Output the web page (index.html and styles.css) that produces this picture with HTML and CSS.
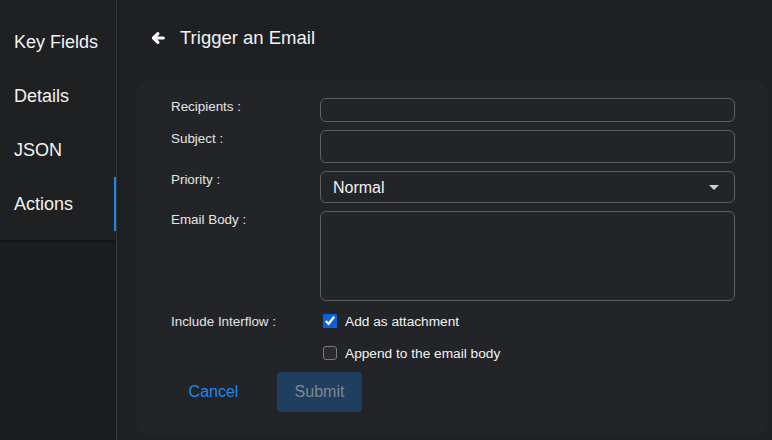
FILE: index.html
```html
<!DOCTYPE html>
<html lang="en">
<head>
    <meta charset="UTF-8">
    <meta name="viewport" content="width=device-width, initial-scale=1.0">
    <title>Trigger an Email</title>
    <link rel="stylesheet" href="styles.css">
</head>
<body>
    <aside class="sidebar">
        <nav class="side-tabs">
            <a href="#key-fields" class="tab">Key Fields</a>
            <a href="#details" class="tab">Details</a>
            <a href="#json" class="tab">JSON</a>
            <a href="#actions" class="tab active">Actions</a>
        </nav>
    </aside>

    <main>
        <div class="page-title">
            <button class="back-btn" aria-label="Back">
                <svg width="14" height="14" viewBox="0 0 14 14">
                    <path d="M12.3 7 H2.8 M6.9 2.6 L2.5 7 L6.9 11.4" fill="none" stroke="#ffffff" stroke-width="3.2" stroke-linecap="round" stroke-linejoin="round"/>
                </svg>
            </button>
            <h1>Trigger an Email</h1>
        </div>

        <form class="email-card" onsubmit="return false">
            <label class="field-label" for="recipients">Recipients :</label>
            <input id="recipients" class="field short" type="text">

            <label class="field-label" for="subject">Subject :</label>
            <input id="subject" class="field" type="text">

            <label class="field-label" for="priority">Priority :</label>
            <div class="select-wrap">
                <select id="priority" class="field">
                    <option>Normal</option>
                    <option>High</option>
                    <option>Low</option>
                </select>
                <span class="caret"></span>
            </div>

            <label class="field-label" for="body">Email Body :</label>
            <textarea id="body" class="field body-field"></textarea>

            <span class="field-label interflow-label">Include Interflow :</span>
            <div class="checks">
                <label class="check-row">
                    <input type="checkbox" checked>
                    <span>Add as attachment</span>
                </label>
                <label class="check-row">
                    <input type="checkbox">
                    <span>Append to the email body</span>
                </label>
            </div>

            <div class="actions">
                <button type="button" class="btn btn-link">Cancel</button>
                <button type="submit" class="btn btn-primary" disabled>Submit</button>
            </div>
        </form>
    </main>
</body>
</html>
```

FILE: styles.css
```css
:root {
    --page-bg: #1f2023;
    --side-bg: #1f2022;
    --card-bg: #232427;
    --border: #5e5f62;
    --text: #f2f2f2;
    --label: #e4e4e4;
    --accent: #1e88f0;
}

* {
    margin: 0;
    padding: 0;
    box-sizing: border-box;
    font-family: "Liberation Sans", Arial, sans-serif;
}

body {
    background: var(--page-bg);
    color: var(--text);
    height: 100vh;
    display: flex;
    overflow: hidden;
}

/* left tab list */
.sidebar {
    width: 117px;
    flex-shrink: 0;
    border-right: 1px solid #3b3c3f;
    background: #1c1d1f;
}

.side-tabs {
    display: flex;
    flex-direction: column;
    padding: 15px 0 9px;
    background: var(--side-bg);
    box-shadow: 0 2px 3px rgba(0,0,0,0.35);
}

.tab {
    height: 54px;
    display: flex;
    align-items: center;
    padding-left: 14px;
    color: var(--text);
    text-decoration: none;
    font-size: 18px;
    border-right: 2px solid transparent;
}

.tab.active {
    border-right-color: var(--accent);
}

main {
    flex: 1;
    padding: 0 4px 3px 19px;
    display: flex;
    flex-direction: column;
}

.page-title {
    height: 80px;
    display: flex;
    align-items: center;
    padding-left: 15px;
    padding-bottom: 5px;
}

.back-btn {
    background: none;
    border: none;
    width: 14px;
    height: 14px;
    margin-right: 15px;
    display: flex;
    cursor: pointer;
}

.page-title h1 {
    font-size: 18.5px;
    font-weight: normal;
    color: var(--text);
}

/* form card */
.email-card {
    flex: 1;
    background: var(--card-bg);
    border-radius: 16px;
    padding: 18px 33px 25px 35px;
    display: grid;
    grid-template-columns: 149px 1fr;
    row-gap: 8px;
    align-content: start;
}

.field-label {
    font-size: 13.4px;
    line-height: 16px;
    padding-top: 1px;
    color: var(--label);
}

.interflow-label {
    padding-top: 5px;
}

.field {
    width: 100%;
    height: 33px;
    background: transparent;
    border: 1px solid var(--border);
    border-radius: 6px;
    color: var(--text);
    font-size: 16px;
    padding: 0 12px;
    outline: none;
}

.field.short {
    height: 24px;
}

.select-wrap {
    position: relative;
}

.select-wrap select {
    height: 32px;
    appearance: none;
    -webkit-appearance: none;
}

.caret {
    position: absolute;
    right: 16px;
    top: 14px;
    width: 0;
    height: 0;
    border-left: 5px solid transparent;
    border-right: 5px solid transparent;
    border-top: 5px solid #cfcfcf;
    pointer-events: none;
}

.body-field {
    height: 90px;
    resize: none;
    padding: 8px 12px;
}

.checks {
    display: flex;
    flex-direction: column;
    gap: 8px;
}

.check-row {
    height: 24px;
    display: flex;
    align-items: center;
    gap: 8px;
    font-size: 13.7px;
    color: var(--text);
}

.check-row input {
    width: 14px;
    height: 14px;
    margin-left: 3px;
    accent-color: #0b62d8;
}

.check-row input:not(:checked) {
    appearance: none;
    -webkit-appearance: none;
    background: #2b2a33;
    border: 1px solid #7a7a7a;
    border-radius: 3px;
}

.actions {
    grid-column: 1 / -1;
    display: flex;
    gap: 21px;
    margin-top: -1px;
}

.btn {
    width: 85px;
    height: 40px;
    border: none;
    border-radius: 4px;
    font-size: 16px;
    background: none;
    cursor: pointer;
}

.btn-link {
    color: var(--accent);
}

.btn-primary {
    background: #1f3e60;
    color: #7c8794;
}
```
